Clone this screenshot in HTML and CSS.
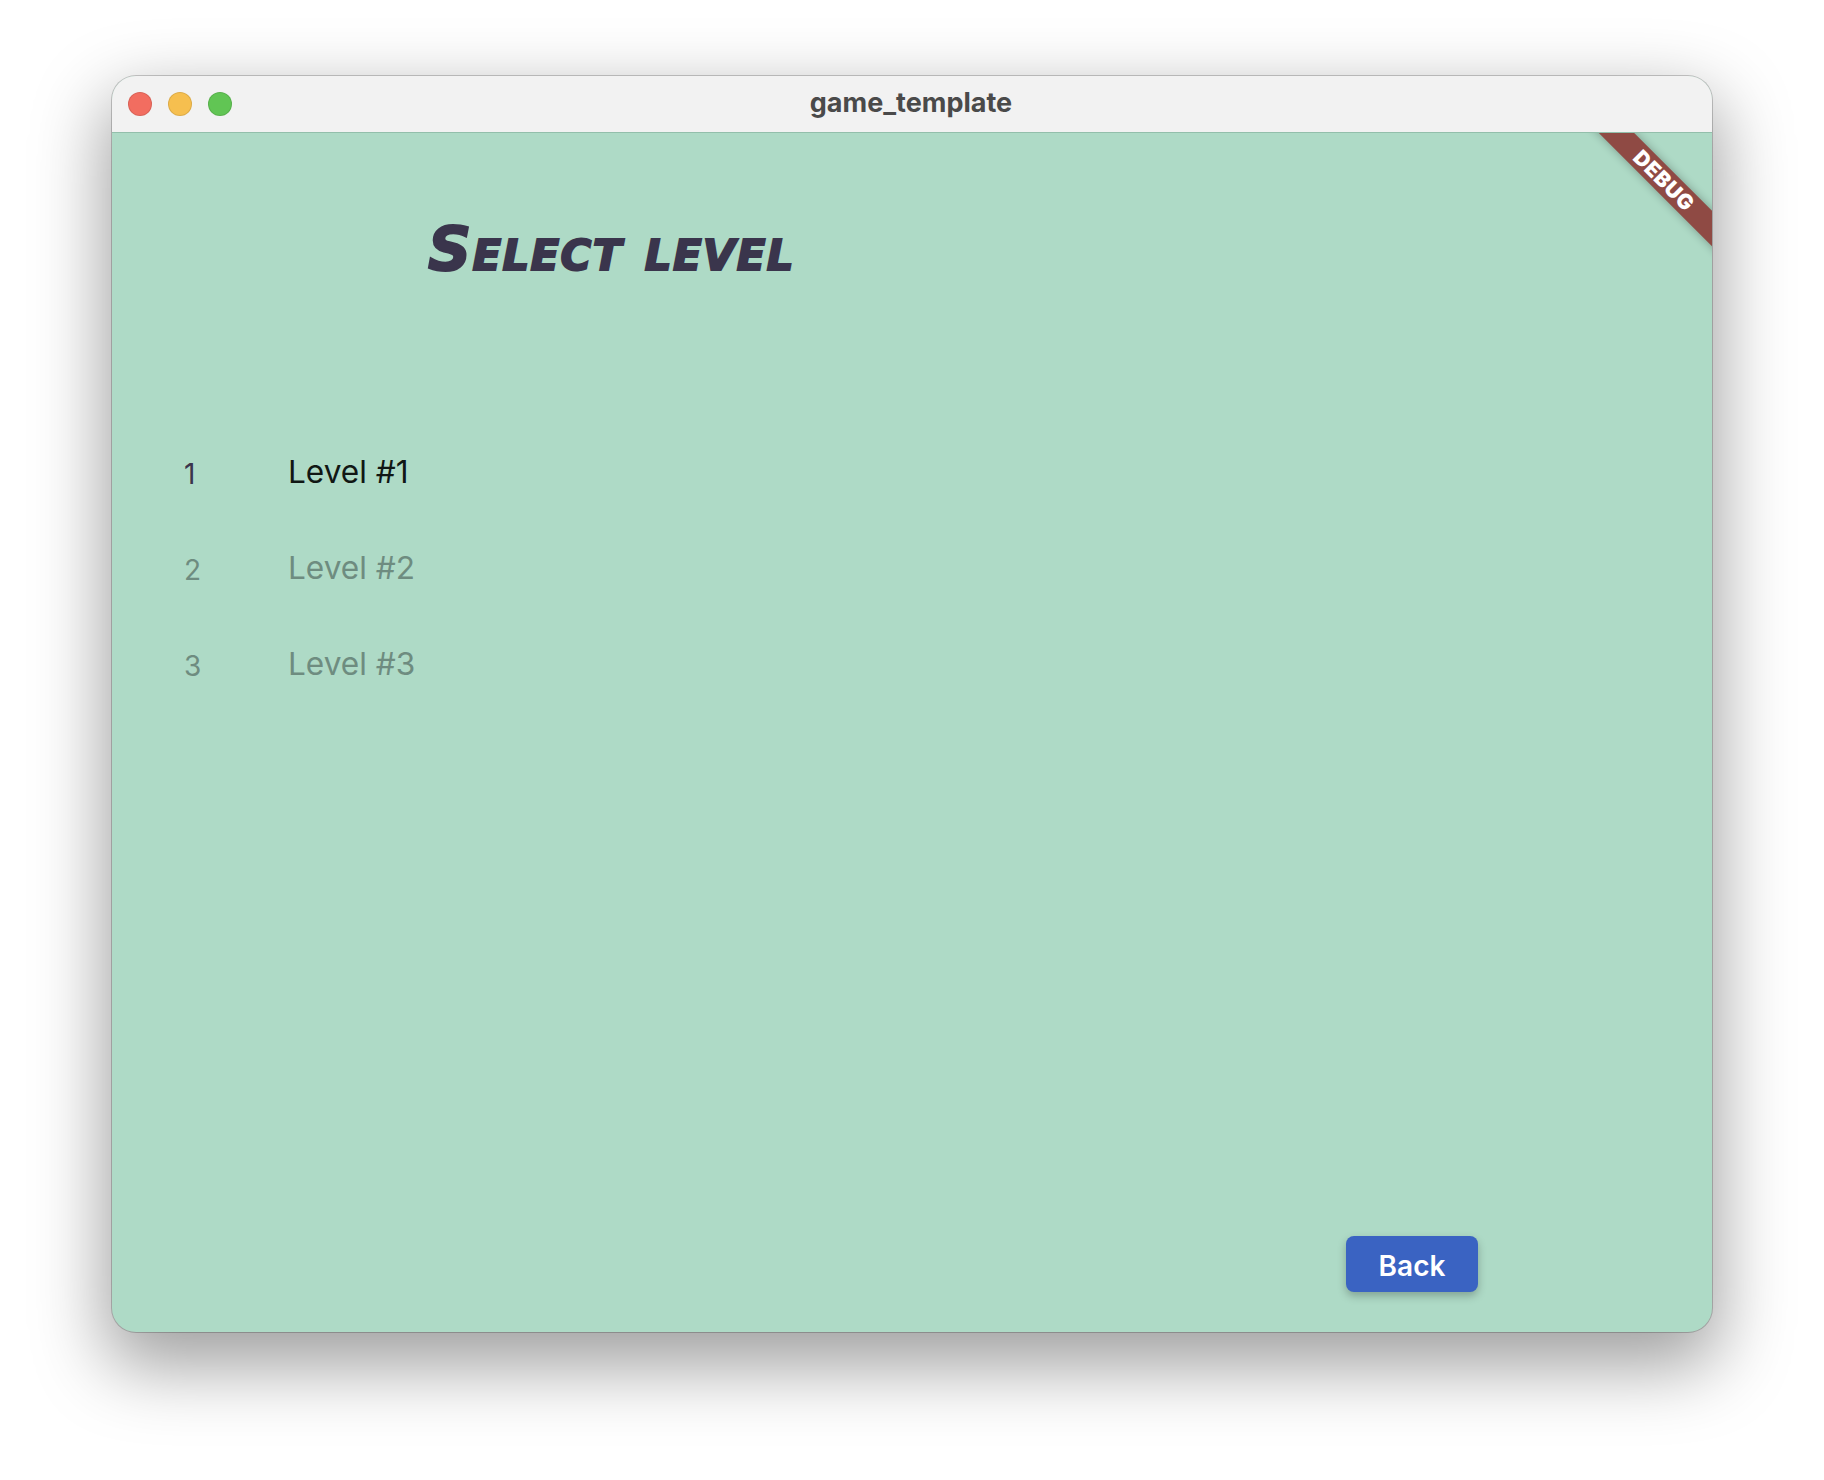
FILE: index.html
```html
<!DOCTYPE html>
<html lang="en">
<head>
<meta charset="utf-8">
<title>game_template</title>
<link rel="stylesheet" href="styles.css">
</head>
<body>
<div class="window">
  <header class="titlebar">
    <div class="lights">
      <span class="light red"></span>
      <span class="light yellow"></span>
      <span class="light green"></span>
    </div>
    <div class="wintitle">game_template</div>
  </header>
  <main class="content">
    <div class="debug"><span>DEBUG</span></div>
    <h1 class="heading">Select level</h1>
    <ul class="levels">
      <li class="level"><span class="num">1</span><span class="name">Level #1</span></li>
      <li class="level locked"><span class="num">2</span><span class="name">Level #2</span></li>
      <li class="level locked"><span class="num">3</span><span class="name">Level #3</span></li>
    </ul>
    <div class="actions"><button class="back">Back</button></div>
  </main>
</div>
</body>
</html>
```
FILE: styles.css
```css
* { box-sizing: border-box; }
html, body { margin: 0; height: 100%; background: #fff; overflow: hidden; }
body { font-family: Inter, "Liberation Sans", sans-serif; padding: 76px 112px 0; }
.window {
  width: 1600px; height: 1256px; border-radius: 24px; overflow: hidden;
  display: flex; flex-direction: column; background: #aedac6; position: relative;
  box-shadow: 0 0 0 1px rgba(0,0,0,.2), 0 28px 72px 6px rgba(0,0,0,.38);
}
.titlebar {
  height: 57px; flex: none; background: #f2f2f2; border-bottom: 1px solid #93bfab;
  display: flex; align-items: center; position: relative; padding: 0 16px;
}
.lights { display: flex; gap: 16px; }
.light { width: 24px; height: 24px; border-radius: 50%; border: 1px solid rgba(0,0,0,.1); }
.red { background: #f26d60; }
.yellow { background: #f6bf4f; }
.green { background: #61c554; }
.wintitle {
  position: absolute; left: 0; right: 2px; top: 11px; text-align: center;
  font-size: 27px; font-weight: 700; color: #4a4a4a; line-height: 32px;
}
.content { flex: 1; display: flex; flex-direction: column; position: relative; overflow: hidden; padding-left: 72px; }
.debug {
  position: absolute; top: 35px; right: -62px; width: 220px; height: 25px;
  transform: rotate(45deg); background: #8f4a44;
  box-shadow: 0 0 10px rgba(0,0,0,.3);
  display: flex; align-items: center; justify-content: center;
  color: #fff; font-weight: 900; font-size: 21px; letter-spacing: .6px;
}
.heading {
  margin: 87px 0 0 244px; height: 58px; line-height: 58px;
  font-family: "DejaVu Sans", sans-serif; font-size: 60px; font-weight: 700; font-style: italic;
  font-variant: small-caps; letter-spacing: 1.3px; color: #3a354c;
  -webkit-text-stroke: 2px #3a354c;
}
.levels { list-style: none; margin: 145px 0 0; padding: 0; display: flex; flex-direction: column; }
.level { height: 96px; display: flex; align-items: center; font-size: 31.6px; color: #111714; }
.num { width: 104px; font-size: 28px; padding-top: 6px; color: #3a354c; }
.locked { color: #6e8c80; }
.locked .num { color: #6e8c80; }
.actions { margin-top: auto; padding: 0 234px 40px 0; display: flex; justify-content: flex-end; }
.back {
  width: 132px; height: 56px; border: 0; border-radius: 8px; background: #3a63c2; color: #fff;
  font: 600 28px Inter, sans-serif; box-shadow: 0 4px 8px rgba(0,0,0,.25); padding: 4px 0 0;
}
```
